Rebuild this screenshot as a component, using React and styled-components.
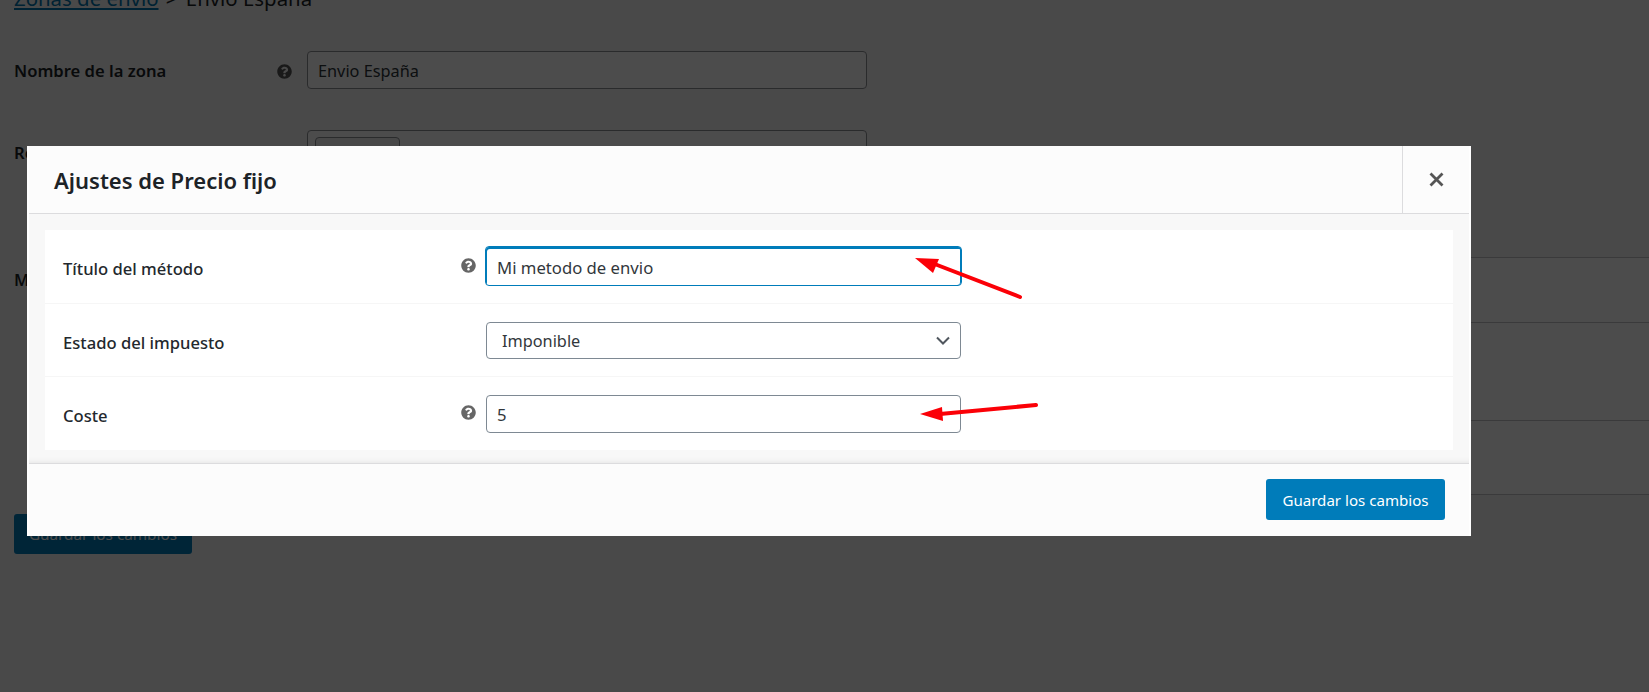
import React from "react";
import styled, { createGlobalStyle } from "styled-components";
import { FaQuestionCircle } from "react-icons/fa";

const Global = createGlobalStyle`
  html, body { margin: 0; padding: 0; height: 100%; overflow: hidden; }
  body { font-family: "Noto Sans", "Open Sans", Arial, sans-serif; background: #f7f7f7; }
  * { box-sizing: border-box; }
`;

const Page = styled.div`
  position: relative;
  width: 1649px;
  height: 692px;
  overflow: hidden;
  background: #f6f6f6;
  color: #1d2327;
  padding-left: 14px;
`;

const Breadcrumb = styled.h2`
  margin: -17px 0 0;
  height: 30px;
  font-size: 20.4px;
  line-height: 30px;
  font-weight: 400;
  color: #1d2327;
`;

const CrumbLink = styled.a`
  color: #0073aa;
  text-decoration: underline;
`;

const CrumbSeparator = styled.span`
  margin: 0 3px 0 2px;
`;

const FormRow = styled.div`
  display: grid;
  grid-template-columns: 293px 1fr;
  height: ${(p) => p.$h}px;
`;

const LabelCell = styled.div`
  display: flex;
  align-items: flex-start;
  justify-content: space-between;
  padding-top: ${(p) => p.$top}px;
  padding-right: 15px;
  font-size: 16.6px;
  font-weight: 600;
  line-height: 20px;
`;

const HelpMark = styled(FaQuestionCircle)`
  width: 15px;
  height: 15px;
  color: ${(p) => p.$color || "#666"};
  flex: none;
`;

const PageInput = styled.div`
  width: 560px;
  height: 38px;
  margin-top: ${(p) => p.$top || 0}px;
  border: 1px solid #8c8f94;
  border-radius: 4px;
  background: #fff;
  padding: 1px 10px 0;
  font-size: 16.3px;
  line-height: 36px;
  color: #2c3338;
`;

const RegionInput = styled(PageInput)`
  height: 90px;
  padding: 6px 7px;
`;

const RegionTag = styled.div`
  width: 85px;
  height: 30px;
  border: 1px solid #8c8f94;
  border-radius: 4px;
  background: #f0f0f1;
`;

const MethodsTable = styled.div`
  display: flex;
  flex-direction: column;
  margin-top: 15px;
  border-top: 1px solid #c3c4c7;
  background: #fff;
`;

const MethodsRow = styled.div`
  height: ${(p) => p.$h}px;
  flex: none;
  border-bottom: 1px solid #c3c4c7;
  background: #fff;
`;

const PageButton = styled.div`
  width: 178px;
  height: 40px;
  margin-top: 19px;
  border-radius: 3px;
  background: #007cba;
  color: #fff;
  font-size: 15.3px;
  line-height: 40px;
  text-align: center;
`;

const Overlay = styled.div`
  position: absolute;
  inset: 0;
  background: rgba(0, 0, 0, 0.7);
`;

const Modal = styled.div`
  position: absolute;
  left: 27px;
  top: 146px;
  width: 1444px;
  height: 390px;
  display: flex;
  flex-direction: column;
  background: #fff;
  padding: 0 2px;
`;

const ModalHeader = styled.header`
  display: flex;
  height: 68px;
  flex: none;
  background: #fcfcfc;
  border-bottom: 1px solid #dcdcde;
`;

const ModalTitle = styled.h1`
  flex: 1;
  margin: 0;
  padding: 1px 0 0 25px;
  font-size: 22px;
  font-weight: 600;
  line-height: 67px;
  color: #1d2327;
`;

const CloseButton = styled.button`
  width: 67px;
  height: 67px;
  padding: 0;
  display: flex;
  align-items: center;
  justify-content: center;
  background: none;
  border: 0;
  border-left: 1px solid #dcdcde;
`;

const ModalBody = styled.div`
  flex: 1;
  background: #f8f8f8;
  padding: 16px 16px 0;
  box-shadow: inset 0 -6px 6px -6px rgba(0, 0, 0, 0.1);
`;

const SettingsCard = styled.div`
  background: #fff;
  height: 220px;
  display: grid;
  grid-template-rows: 73px 73px 74px;
`;

const SettingRow = styled.div`
  display: flex;
  align-items: center;
  padding-left: 18px;
  border-top: ${(p) => (p.$first ? "0" : "1px solid #f6f6f6")};
`;

const SettingLabel = styled.label`
  width: 398px;
  flex: none;
  padding-top: 4px;
  font-size: 16.6px;
  font-weight: 500;
  color: #23282d;
`;

const HelpSlot = styled.span`
  width: 15px;
  height: 15px;
  margin: -3px 10px 0 0;
  flex: none;
  display: flex;
`;

const TextField = styled.input`
  width: ${(p) => (p.$focus ? 477 : 475)}px;
  height: ${(p) => (p.$focus ? 40 : 38)}px;
  margin-left: ${(p) => (p.$focus ? -1 : 0)}px;
  margin-top: ${(p) => (p.$focus ? -1 : 0)}px;
  padding: 2px ${(p) => (p.$focus ? 11 : 10)}px 0;
  border: 1px solid ${(p) => (p.$focus ? "#007cba" : "#7e8993")};
  box-shadow: ${(p) =>
    p.$focus ? "inset 1px 2px 0 #007cba, inset -1px 0 0 #007cba" : "none"};
  border-radius: 4px;
  background: #fff;
  font-family: inherit;
  font-size: 16.7px;
  color: #32373c;
  outline: none;
`;

const SelectField = styled.div`
  width: 475px;
  height: 37px;
  flex: none;
  display: flex;
  align-items: center;
  justify-content: space-between;
  margin-left: 25px;
  margin-top: 1px;
  padding: 0 10px 0 15px;
  border: 1px solid #7e8993;
  border-radius: 4px;
  background: #fff;
  font-size: 16.3px;
  color: #32373c;
`;

const ModalFooter = styled.footer`
  display: flex;
  justify-content: flex-end;
  height: 73px;
  flex: none;
  padding: 15px 24px 0 0;
  background: #fcfcfc;
  border-top: 1px solid #dcdcde;
`;

const SaveButton = styled.button`
  width: 179px;
  height: 41px;
  border: 0;
  border-radius: 3px;
  background: #007cba;
  color: #fff;
  font-family: inherit;
  font-size: 15.1px;
`;

const Annotations = styled.svg`
  position: absolute;
  left: 0;
  top: 0;
  width: 1649px;
  height: 692px;
  pointer-events: none;
`;

export default function App() {
  return (
    <Page>
      <Global />
      <Breadcrumb>
        <CrumbLink>Zonas de envío</CrumbLink> <CrumbSeparator>&gt;</CrumbSeparator> Envío España
      </Breadcrumb>
      <FormRow $h={117}>
        <LabelCell $top={48}>
          Nombre de la zona
          <HelpMark $color="#555" style={{ marginTop: 3 }} />
        </LabelCell>
        <PageInput $top={38}>Envio España</PageInput>
      </FormRow>
      <FormRow $h={112}>
        <LabelCell $top={13}>Regiones de la zona</LabelCell>
        <RegionInput>
          <RegionTag />
        </RegionInput>
      </FormRow>
      <FormRow $h={253}>
        <LabelCell $top={28}>Métodos de envío</LabelCell>
        <MethodsTable>
          <MethodsRow $h={65} />
          <MethodsRow $h={98} />
          <MethodsRow $h={74} />
        </MethodsTable>
      </FormRow>
      <PageButton>Guardar los cambios</PageButton>

      <Overlay />

      <Modal>
        <ModalHeader>
          <ModalTitle>Ajustes de Precio fijo</ModalTitle>
          <CloseButton aria-label="Cerrar">
            <svg width="15" height="15" viewBox="0 0 15 15">
              <path d="M1.5 1.5 L13.5 13.5 M13.5 1.5 L1.5 13.5" stroke="#555" strokeWidth="2.8" />
            </svg>
          </CloseButton>
        </ModalHeader>
        <ModalBody>
          <SettingsCard>
            <SettingRow $first>
              <SettingLabel>Título del método</SettingLabel>
              <HelpSlot>
                <HelpMark />
              </HelpSlot>
              <TextField $focus readOnly value="Mi metodo de envio" />
            </SettingRow>
            <SettingRow>
              <SettingLabel>Estado del impuesto</SettingLabel>
              <SelectField>
                Imponible
                <svg width="14" height="9" viewBox="0 0 14 9">
                  <path d="M1 1.5 L7 7.5 L13 1.5" fill="none" stroke="#50575e" strokeWidth="2" />
                </svg>
              </SelectField>
            </SettingRow>
            <SettingRow>
              <SettingLabel>Coste</SettingLabel>
              <HelpSlot>
                <HelpMark />
              </HelpSlot>
              <TextField readOnly value="5" />
            </SettingRow>
          </SettingsCard>
        </ModalBody>
        <ModalFooter>
          <SaveButton>Guardar los cambios</SaveButton>
        </ModalFooter>
      </Modal>

      <Annotations viewBox="0 0 1649 692">
        <path d="M1020 297 L932 263" stroke="#fb0007" strokeWidth="4" strokeLinecap="round" />
        <polygon points="915,258 939,259 933,273" fill="#fb0007" />
        <path d="M1036 405 L940 414" stroke="#fb0007" strokeWidth="4" strokeLinecap="round" />
        <polygon points="920,414 942,407 943,421" fill="#fb0007" />
      </Annotations>
    </Page>
  );
}
